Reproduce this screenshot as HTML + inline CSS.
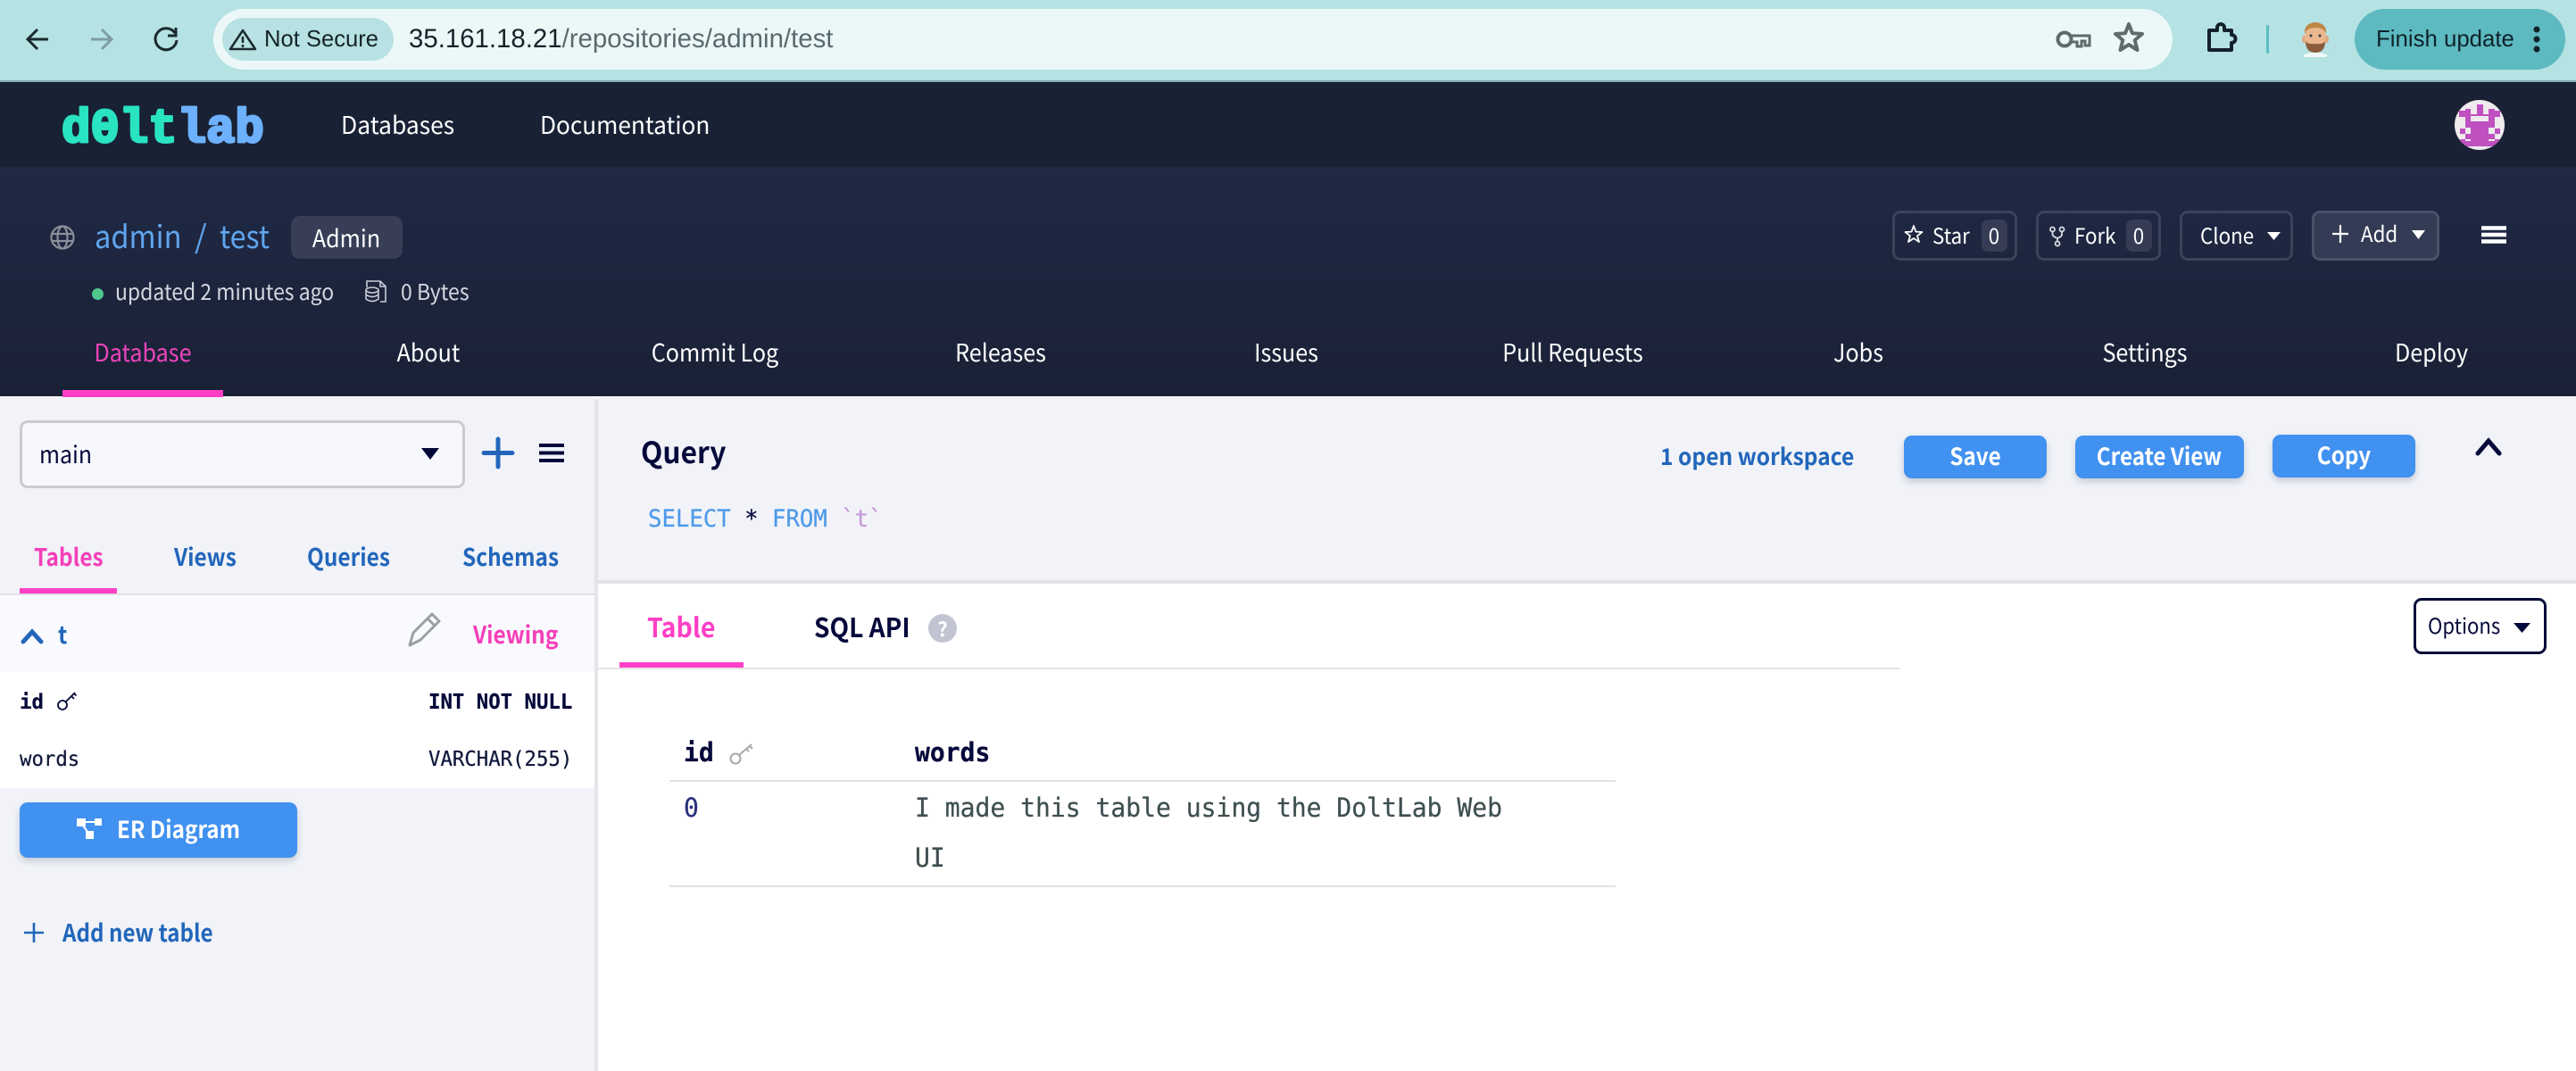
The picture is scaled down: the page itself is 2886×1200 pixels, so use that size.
<!DOCTYPE html>
<html lang="en">
<head>
<meta charset="utf-8">
<title>DoltLab</title>
<style>
html,body{margin:0;padding:0;width:2886px;height:1200px;overflow:hidden;background:#fff}
#p{position:relative;width:2886px;height:1200px;overflow:hidden;font-family:"Noto Sans CJK JP","Liberation Sans",sans-serif}
.b{position:absolute;box-sizing:border-box}
.t{position:absolute;white-space:nowrap;line-height:40px;height:40px;transform:scaleX(var(--k,1));transform-origin:0 50%}
.c{transform:translateX(-50%) scaleX(var(--k,1));transform-origin:50% 50%;text-align:center}
.ch{font-family:"Liberation Sans",sans-serif}
.m{font-family:"DejaVu Sans Mono","Liberation Mono",monospace;--k:.95;-webkit-text-stroke:.25px currentColor}
.s{font-weight:600}
.nav{font-size:27px;color:#fff}
.tab{--k:.93}
.blue{color:#2266bb}
.btn{background:#4191f0;border-radius:9px;box-shadow:0 4px 8px rgba(40,60,90,.22)}
.wb{font-size:26.5px;color:#fff;font-weight:600;--k:.915}
.sd{font-size:27px;--k:.905}
.rb{font-size:24px;color:#fff;--k:.93}
svg{position:absolute;left:0;top:0}
</style>
</head>
<body>
<div id="p">
<!-- chrome -->
<div class="b" style="left:0;top:0;width:2886px;height:90px;background:#b5e2e3"></div>
<div class="b" style="left:0;top:90px;width:2886px;height:2px;background:#7fabb0"></div>
<div class="b" style="left:239px;top:10px;width:2195px;height:68px;border-radius:34px;background:#ecf8f8"></div>
<div class="b" style="left:249px;top:20px;width:192px;height:48px;border-radius:24px;background:#b7e1e2"></div>
<div class="t ch" style="left:296px;top:24px;font-size:25.6px;color:#15232a">Not Secure</div>
<div class="t ch" style="left:458px;top:24px;font-size:29.4px;color:#15232a">35.161.18.21<span style="color:#586a6e">/repositories/admin/test</span></div>
<div class="b" style="left:2638px;top:10px;width:236px;height:68px;border-radius:34px;background:#5cbac0"></div>
<div class="t ch" style="left:2662px;top:24px;font-size:25.8px;color:#10222a">Finish update</div>

<!-- nav -->
<div class="b" style="left:0;top:92px;width:2886px;height:95px;background:#192134"></div>
<div class="b" style="left:0;top:187px;width:2886px;height:257px;background:linear-gradient(#202945,#1a2136)"></div>
<div class="t nav" style="left:382px;top:119px;--k:.98">Databases</div>
<div class="t nav" style="left:605px;top:119px;--k:.97">Documentation</div>

<!-- repo head -->
<div class="t" style="left:106px;top:242px;font-size:35px;color:#5fa5ee;height:44px;line-height:44px;--k:.93">admin</div>
<div class="t" style="left:218px;top:242px;font-size:35px;color:#5fa5ee;height:44px;line-height:44px">/</div>
<div class="t" style="left:246px;top:242px;font-size:35px;color:#5fa5ee;height:44px;line-height:44px;--k:.92">test</div>
<div class="b" style="left:326px;top:242px;width:125px;height:48px;border-radius:10px;background:#373e56"></div>
<div class="t c" style="left:388px;top:246px;font-size:27px;color:#fff;--k:.93">Admin</div>
<div class="b" style="left:103px;top:323px;width:13px;height:13px;border-radius:50%;background:#4fc78d"></div>
<div class="t" style="left:129px;top:307px;font-size:24.5px;color:#d5d8e0;--k:.937">updated 2 minutes ago</div>
<div class="t" style="left:449px;top:307px;font-size:24.5px;color:#d5d8e0;--k:.94">0 Bytes</div>

<!-- repo tabs -->
<div class="t nav tab c" style="left:160px;top:374px;color:#ed45bb">Database</div>
<div class="t nav tab c" style="left:480px;top:374px">About</div>
<div class="t nav tab c" style="left:801px;top:374px">Commit Log</div>
<div class="t nav tab c" style="left:1121px;top:374px">Releases</div>
<div class="t nav tab c" style="left:1441px;top:374px">Issues</div>
<div class="t nav tab c" style="left:1762px;top:374px">Pull Requests</div>
<div class="t nav tab c" style="left:2082px;top:374px">Jobs</div>
<div class="t nav tab c" style="left:2403px;top:374px">Settings</div>
<div class="t nav tab c" style="left:2724px;top:374px">Deploy</div>
<div class="b" style="left:70px;top:437px;width:180px;height:8px;background:#ff3fc6"></div>

<!-- repo buttons -->
<div class="b" style="left:2120px;top:236px;width:140px;height:56px;border:3px solid #3c4359;border-radius:9px"></div>
<div class="b" style="left:2220px;top:246px;width:29px;height:36px;border-radius:7px;background:#353c54"></div>
<div class="t rb" style="left:2165px;top:243px">Star</div>
<div class="t rb c" style="left:2234px;top:243px">0</div>
<div class="b" style="left:2281px;top:236px;width:140px;height:56px;border:3px solid #3c4359;border-radius:9px"></div>
<div class="b" style="left:2382px;top:246px;width:29px;height:36px;border-radius:7px;background:#353c54"></div>
<div class="t rb" style="left:2324px;top:243px">Fork</div>
<div class="t rb c" style="left:2396px;top:243px">0</div>
<div class="b" style="left:2442px;top:236px;width:127px;height:56px;border:3px solid #3c4359;border-radius:9px"></div>
<div class="t rb" style="left:2465px;top:243px">Clone</div>
<div class="b" style="left:2590px;top:236px;width:143px;height:56px;border:3px solid #4a5168;border-radius:9px;background:#343b54"></div>
<div class="t rb" style="left:2645px;top:241px">Add</div>

<!-- sidebar -->
<div class="b" style="left:0;top:445px;width:666px;height:755px;background:#f1f3f8"></div>
<div class="b" style="left:666px;top:447px;width:4px;height:753px;background:#e3e5e9"></div>
<div class="b" style="left:22px;top:471px;width:499px;height:76px;border:3px solid #c9cbd0;border-radius:9px;background:#f7f8fc"></div>
<div class="t" style="left:44px;top:488px;font-size:27px;color:#05093a;--k:.92">main</div>
<div class="t s sd" style="left:38px;top:603px;color:#f43fb9">Tables</div>
<div class="t s sd blue" style="left:195px;top:603px">Views</div>
<div class="t s sd blue" style="left:344px;top:603px">Queries</div>
<div class="t s sd blue" style="left:518px;top:603px">Schemas</div>
<div class="b" style="left:0;top:665px;width:666px;height:2px;background:#dfe1e6"></div>
<div class="b" style="left:22px;top:659px;width:109px;height:6px;background:#ff3fc6"></div>
<div class="b" style="left:0;top:667px;width:666px;height:86px;background:#f9fafd"></div>
<div class="b" style="left:0;top:753px;width:666px;height:130px;background:#fff"></div>
<div class="t s sd blue" style="left:65px;top:690px">t</div>
<div class="t s sd" style="left:530px;top:690px;color:#f43fb9">Viewing</div>
<div class="t m" style="left:22px;top:766px;font-size:23.5px;font-weight:700;color:#05093a">id</div>
<div class="t m" style="left:480px;top:766px;font-size:23.5px;font-weight:700;color:#05093a">INT NOT NULL</div>
<div class="t m" style="left:22px;top:830px;font-size:23.5px;color:#10183a">words</div>
<div class="t m" style="left:480px;top:830px;font-size:23.5px;color:#10183a">VARCHAR(255)</div>
<div class="b btn" style="left:22px;top:899px;width:311px;height:62px"></div>
<div class="t wb" style="left:131px;top:908px">ER Diagram</div>
<div class="t s sd blue" style="left:70px;top:1024px;--k:.893">Add new table</div>

<!-- query -->
<div class="b" style="left:670px;top:445px;width:2216px;height:205px;background:#f1f3f8"></div>
<div class="b" style="left:670px;top:650px;width:2216px;height:4px;background:#e0e2e5"></div>
<div class="t s" style="left:718px;top:485px;font-size:33px;color:#05093a;--k:.96">Query</div>
<div class="t m" style="left:726px;top:562px;font-size:27px;color:#05093a"><span style="color:#4f9ae8">SELECT</span> * <span style="color:#4f9ae8">FROM</span> <span style="color:#c79ad8">`t`</span></div>
<div class="t s blue" style="left:1860px;top:491px;font-size:26px;--k:.944">1 open workspace</div>
<div class="b btn" style="left:2133px;top:488px;width:160px;height:48px"></div>
<div class="t wb c" style="left:2213px;top:490px">Save</div>
<div class="b btn" style="left:2325px;top:488px;width:189px;height:48px"></div>
<div class="t wb c" style="left:2419px;top:490px">Create View</div>
<div class="b btn" style="left:2546px;top:487px;width:160px;height:48px"></div>
<div class="t wb c" style="left:2626px;top:489px">Copy</div>

<!-- result tabs -->
<div class="t s" style="left:725px;top:681px;font-size:30px;color:#ff3fc6;--k:.95">Table</div>
<div class="t s" style="left:912px;top:681px;font-size:30px;color:#05093a;--k:.935">SQL API</div>
<div class="b" style="left:1040px;top:688px;width:32px;height:32px;border-radius:50%;background:#c2c5d1"></div>
<div class="t c s" style="left:1056px;top:684px;font-size:22px;color:#fff">?</div>
<div class="b" style="left:670px;top:748px;width:1459px;height:2px;background:#e4e4e6"></div>
<div class="b" style="left:694px;top:742px;width:139px;height:6px;background:#ff3fc6"></div>
<div class="b" style="left:2704px;top:670px;width:149px;height:63px;border:3px solid #05093a;border-radius:9px;background:#fff"></div>
<div class="t" style="left:2720px;top:680px;font-size:24px;color:#05093a;--k:.92">Options</div>

<!-- table -->
<div class="t m" style="left:766px;top:823px;font-size:29.5px;font-weight:700;color:#05093a">id</div>
<div class="t m" style="left:1025px;top:823px;font-size:29.5px;font-weight:700;color:#05093a">words</div>
<div class="b" style="left:750px;top:874px;width:1060px;height:2px;background:#e2e2e2"></div>
<div class="t m" style="left:766px;top:885px;font-size:29.5px;color:#29307a">0</div>
<div class="t m" style="left:1025px;top:885px;font-size:29.5px;color:#3e4f50">I made this table using the DoltLab Web</div>
<div class="t m" style="left:1025px;top:941px;font-size:29.5px;color:#3e4f50">UI</div>
<div class="b" style="left:750px;top:992px;width:1060px;height:2px;background:#e2e2e2"></div>

<!-- icons -->
<svg width="2886" height="1200" viewBox="0 0 2886 1200" fill="none">
  <!-- logo (live text) -->
  <text x="69" y="159" font-family="Liberation Mono" font-weight="700" font-size="54" fill="#29e3c1" stroke="#29e3c1" stroke-width="3" stroke-linejoin="round">d0lt<tspan fill="#6db0fc" stroke="#6db0fc">lab</tspan></text>
  <!-- chrome nav -->
  <path d="M54 44H33M42 33L31 44L42 55" stroke="#1b2a2e" stroke-width="3"/>
  <path d="M102 44H123M114 33L125 44L114 55" stroke="#7f9da2" stroke-width="3"/>
  <path d="M196 37A12 12 0 1 0 198 45" stroke="#1b2a2e" stroke-width="3"/><path d="M197 31V40H188" stroke="#1b2a2e" stroke-width="3"/>
  <path d="M272 34L286 55H258Z" stroke="#1b2a2e" stroke-width="2.5" stroke-linejoin="round"/>
  <path d="M272 41V48M272 50V53" stroke="#1b2a2e" stroke-width="2.5"/>
  <!-- key -->
  <circle cx="2313" cy="44" r="7.5" stroke="#5e6a6c" stroke-width="4"/>
  <path d="M2321 40H2341V51H2336V46H2332V52H2327V47H2320" stroke="#5e6a6c" stroke-width="3"/>
  <!-- star -->
  <polygon points="2385,27 2389,37.3 2400,38 2391.7,45 2394.500,56 2385,50 2375.500,56 2378.3,45 2370,38 2381,37.3" stroke="#5e6a6c" stroke-width="4" stroke-linejoin="round"/>
  <!-- puzzle -->
  <path d="M2475 34H2484V31a4 4 0 0 1 8 0V34H2500V39a4.500 4.500 0 0 1 0 9V56H2475Z" stroke="#14212a" stroke-width="4" stroke-linejoin="round"/>
  <rect x="2539" y="28" width="3" height="32" rx="1.500" fill="#5bbdc2"/>
  <!-- bitmoji -->
  <path d="M2580 62Q2594 55 2608 62L2606 64H2582Z" fill="#f3f7f7"/>
  <ellipse cx="2581.500" cy="44" rx="2.500" ry="4" fill="#e2a67c"/><ellipse cx="2606.500" cy="44" rx="2.500" ry="4" fill="#e2a67c"/>
  <ellipse cx="2594" cy="43" rx="12" ry="16" fill="#eab78f"/>
  <path d="M2582 38Q2581 26 2594 25Q2607 26 2606 38Q2604 31 2594 31Q2584 31 2582 38Z" fill="#bd8745"/>
  <path d="M2583 46Q2585 50 2594 49Q2603 50 2605 46Q2605 59 2594 59Q2583 59 2583 46Z" fill="#8a5c3d"/>
  <circle cx="2589" cy="40" r="1.500" fill="#2b3a48"/><circle cx="2599" cy="40" r="1.500" fill="#2b3a48"/>
  <circle cx="2842" cy="33" r="3.500" fill="#10222a"/><circle cx="2842" cy="44" r="3.500" fill="#10222a"/><circle cx="2842" cy="55" r="3.500" fill="#10222a"/>
  <!-- identicon -->
  <clipPath id="av"><circle cx="2778" cy="140" r="28"/></clipPath>
  <g clip-path="url(#av)">
    <rect x="2750" y="112" width="56" height="56" fill="#eeeaee"/>
    <g fill="#bf50c0">
      <rect x="2775" y="117" width="7" height="12"/>
      <rect x="2762" y="122" width="6" height="7"/>
      <rect x="2788" y="122" width="7" height="7"/>
      <rect x="2755" y="124" width="7" height="7"/><rect x="2795" y="124" width="6" height="7"/>
      <rect x="2762" y="128" width="33" height="2"/>
      <rect x="2762" y="130" width="6" height="7"/><rect x="2788" y="130" width="7" height="7"/>
      <rect x="2762" y="136" width="33" height="7"/>
      <rect x="2768" y="143" width="20" height="21"/>
      <rect x="2756" y="144" width="6" height="6"/><rect x="2795" y="144" width="6" height="6"/>
      <rect x="2762" y="150" width="6" height="6"/><rect x="2788" y="150" width="7" height="6"/>
      <rect x="2756" y="156" width="6" height="6"/><rect x="2795" y="156" width="6" height="6"/>
      <rect x="2762" y="158" width="33" height="6"/>
    </g>
  </g>
  <!-- globe -->
  <g stroke="#8b8f9b" stroke-width="2.200">
    <circle cx="70" cy="266" r="12.500"/><ellipse cx="70" cy="266" rx="5.500" ry="12.500"/>
    <path d="M58 262H82M58 270H82"/>
  </g>
  <!-- file db -->
  <g stroke="#c9cdd6" stroke-width="1.600">
    <path d="M411 322V315H426L432 321V338H426M426 315V321H432"/>
    <ellipse cx="417" cy="325" rx="7" ry="3"/><path d="M410 325V335Q417 340 424 335V325M410 330Q417 335 424 330"/>
  </g>
  <!-- repo btn icons -->
  <polygon points="2144,253 2146.400,259.600 2153.500,260 2148,264.300 2150,271 2144,267 2138,271 2140,264.300 2134.500,260 2141.600,259.600" stroke="#fff" stroke-width="1.800" stroke-linejoin="round"/>
  <g stroke="#d9dce3" stroke-width="1.800">
    <circle cx="2299.500" cy="257" r="2.500"/><circle cx="2310" cy="257" r="2.500"/><circle cx="2305" cy="273" r="2.500"/>
    <path d="M2299.500 260V263Q2300 265 2305 267V270M2310 260V263Q2310 265 2305 267"/>
  </g>
  <polygon points="2540,260 2555,260 2547.500,269" fill="#fff"/>
  <path d="M2622 252V272M2613 262H2631" stroke="#fff" stroke-width="2.200"/>
  <polygon points="2702,258 2717,258 2709.500,268" fill="#fff"/>
  <path d="M2780 255.500H2808M2780 263H2808M2780 270.500H2808" stroke="#fff" stroke-width="4.500"/>
  <!-- sidebar icons -->
  <polygon points="472,502 492,502 482,515" fill="#05093a"/>
  <path d="M558 492V523M542 507.500H574" stroke="#2266bb" stroke-width="5" stroke-linecap="round"/>
  <path d="M604 499H632M604 507.500H632M604 516H632" stroke="#05093a" stroke-width="4"/>
  <path d="M26 719L36 708L46 719" stroke="#2266bb" stroke-width="5" stroke-linecap="round"/>
  <path d="M459 723l4-14L484 688l8 8L471 717ZM479 693l8 8" stroke="#9aa0a0" stroke-width="3" stroke-linejoin="round"/>
  <circle cx="70" cy="790" r="5" stroke="#05093a" stroke-width="1.800"/>
  <path d="M74 786L84 776M80 780l3 3M83 777l2.500 2.500" stroke="#05093a" stroke-width="1.800"/>
  <g fill="#fff">
    <rect x="86" y="917" width="10" height="9"/><rect x="106" y="917" width="8" height="8"/><rect x="96" y="931" width="9" height="9"/>
  </g>
  <path d="M94 921H107M92 924L99 933" stroke="#fff" stroke-width="2"/>
  <path d="M38 1034V1056M27 1045H49" stroke="#2266bb" stroke-width="2.600"/>
  <!-- query icons -->
  <path d="M2776 508L2788 494L2800 508" stroke="#05093a" stroke-width="5" stroke-linecap="round"/>
  <polygon points="2816,698 2835,698 2825.500,709" fill="#05093a"/>
  <circle cx="824" cy="850" r="5.500" stroke="#a5a9a9" stroke-width="2"/>
  <path d="M828 846L842 834M836 839l3 3M840 836l3 3" stroke="#a5a9a9" stroke-width="2"/>
</svg>
</div>
</body>
</html>
